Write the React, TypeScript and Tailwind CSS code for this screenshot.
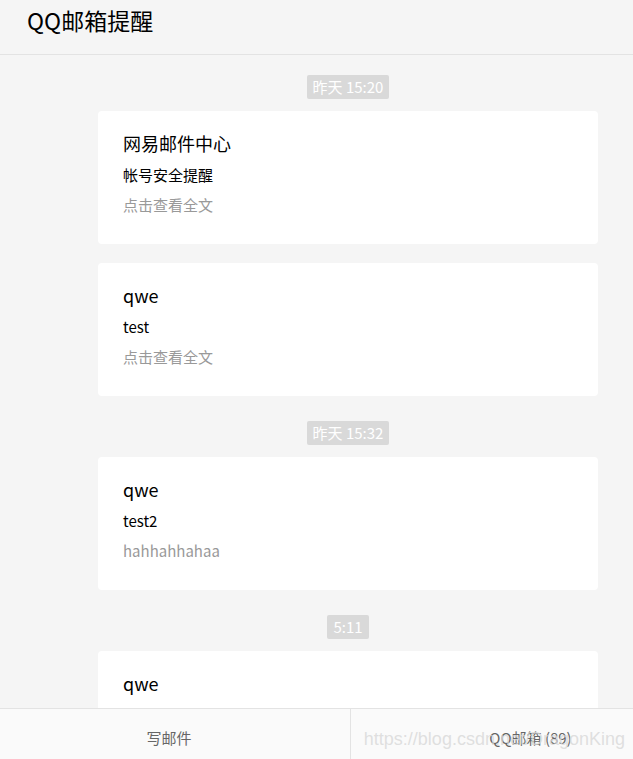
import React from 'react';

type Mail = { from: string; subject?: string; summary?: string };
type Group = { time: string; mails: Mail[] };

const GROUPS: Group[] = [
  {
    time: '昨天 15:20',
    mails: [
      { from: '网易邮件中心', subject: '帐号安全提醒', summary: '点击查看全文' },
      { from: 'qwe', subject: 'test', summary: '点击查看全文' },
    ],
  },
  {
    time: '昨天 15:32',
    mails: [{ from: 'qwe', subject: 'test2', summary: 'hahhahhahaa' }],
  },
  {
    time: '5:11',
    mails: [{ from: 'qwe', subject: 'test3', summary: '点击查看全文' }],
  },
];

const font = { fontFamily: '"Microsoft YaHei", "Noto Sans CJK SC", "Noto Sans", sans-serif' };

function MailCard({ mail }: { mail: Mail }) {
  return (
    <div className="w-[500px] bg-white rounded-[4px] pl-[25px] pr-[25px] pt-[20px] pb-[29px]">
      <div className="text-[18px] leading-[24px] text-black">{mail.from}</div>
      <div className="mt-[10px] text-[15px] leading-[20px] text-black">{mail.subject}</div>
      <div className="mt-[10px] text-[15px] leading-[20px] text-[#999999]">{mail.summary}</div>
    </div>
  );
}

export default function App() {
  return (
    <div className="relative h-[759px] w-full overflow-hidden bg-[#f5f5f5]" style={font}>
      <div className="flex h-full w-[700px] flex-col">
        {/* header */}
        <div className="h-[55px] shrink-0 border-b border-[#e3e3e3] bg-[#f5f5f5] pl-[27px] pt-[5px]">
          <h1 className="text-[23px] leading-[30px] text-black">QQ邮箱提醒</h1>
        </div>

        {/* message list */}
        <div className="w-[696px] flex-1 overflow-hidden pt-[20px]">
          {GROUPS.map((g, i) => (
            <div key={g.time} className={i === 0 ? 'flex flex-col items-center' : 'mt-[25px] flex flex-col items-center'}>
              <span className="h-[24px] rounded-[2px] bg-[#d9d9d9] px-[6px] text-[15px] leading-[24px] text-white">
                {g.time}
              </span>
              <div className="mt-[12px] flex flex-col gap-[19px]">
                {g.mails.map((m, j) => (
                  <MailCard key={j} mail={m} />
                ))}
              </div>
            </div>
          ))}
        </div>

        {/* bottom tabs */}
        <div className="relative flex h-[51px] shrink-0 border-t border-[#e3e3e3] bg-[#fafafa]">
          <div className="flex w-[350px] justify-center pr-[12px] pt-[19px] text-[15px] leading-[20px] text-[#666666]">写邮件</div>
          <div className="flex w-[350px] justify-center border-l border-[#e3e3e3] pl-[10px] pt-[19px] text-[15px] leading-[20px] text-[#666666]">
            QQ邮箱 (89)
          </div>
        </div>
      </div>

      {/* csdn watermark */}
      <div
        className="pointer-events-none absolute bottom-[9px] right-[8px] text-[18px] leading-[22px] text-[#d8d8d8]/80"
        style={{ fontFamily: '"Liberation Sans", Arial, sans-serif' }}
      >
        https://blog.csdn.net/DragonKing
      </div>
    </div>
  );
}
